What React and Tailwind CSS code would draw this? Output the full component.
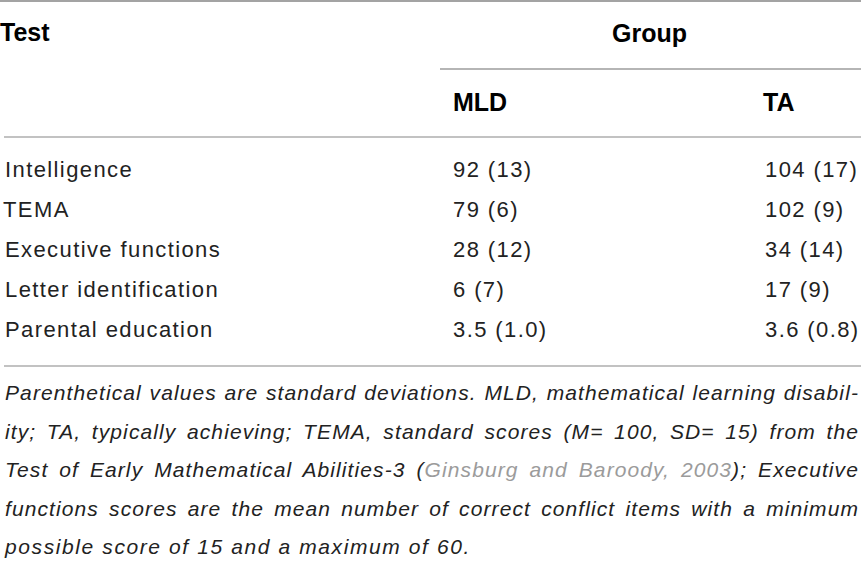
import React from "react";

const rows = [
  { test: "Intelligence", mld: "92 (13)", ta: "104 (17)" },
  { test: "TEMA", mld: "79 (6)", ta: "102 (9)", tight: true },
  { test: "Executive functions", mld: "28 (12)", ta: "34 (14)" },
  { test: "Letter identification", mld: "6 (7)", ta: "17 (9)" },
  { test: "Parental education", mld: "3.5 (1.0)", ta: "3.6 (0.8)" },
];

const App = () => {
  return (
    <div
      className="w-[861px] h-[565px] bg-white overflow-hidden text-[#222]"
      style={{ fontFamily: '"Liberation Sans", Arial, sans-serif' }}
    >
      {/* Top rule */}
      <div className="h-[2px] bg-[#a3a3a3]" />

      {/* Header */}
      <div className="grid grid-cols-[440px_323px_1fr] text-[25px] font-bold text-black leading-[30px]">
        <div className="row-span-3 pt-[15px]">Test</div>
        <div className="col-span-2 h-[66px] pt-[16px] text-center pr-[2px]">Group</div>
        <div className="col-span-2 h-[2px] bg-[#b5b5b5]" />
        <div className="h-[66px] pt-[17px] pl-[13px]">MLD</div>
        <div className="h-[66px] pt-[17px]">TA</div>
      </div>
      <div className="ml-[4px] h-[2px] bg-[#c2c2c2]" />

      {/* Body */}
      <div className="pt-[12px] pb-[15px] text-[22px] leading-[40px] tracking-[1.4px]">
        {rows.map((r) => (
          <div key={r.test} className="grid grid-cols-[440px_323px_1fr]">
            <div className={r.tight ? "pl-[3px]" : "pl-[5px]"}>{r.test}</div>
            <div className="pl-[13px]">{r.mld}</div>
            <div className="pl-[2px]">{r.ta}</div>
          </div>
        ))}
      </div>
      <div className="ml-[4px] h-[2px] bg-[#c2c2c2]" />

      {/* Footnote */}
      <div className="pt-[7px] pl-[5px] pr-[2px] text-[21px] leading-[38.5px] italic tracking-[1.1px] text-[#222]">
        <div className="text-justify [text-align-last:justify]">
          Parenthetical values are standard deviations. MLD, mathematical learning disabil-
        </div>
        <div className="text-justify [text-align-last:justify]">
          ity; TA, typically achieving; TEMA, standard scores (M= 100, SD= 15) from the
        </div>
        <div className="text-justify [text-align-last:justify]">
          Test of Early Mathematical Abilities-3 (
          <span className="text-[#9b9b9b]">Ginsburg and Baroody, 2003</span>); Executive
        </div>
        <div className="text-justify [text-align-last:justify]">
          functions scores are the mean number of correct conflict items with a minimum
        </div>
        <div className="tracking-[1.6px]">possible score of 15 and a maximum of 60.</div>
      </div>
    </div>
  );
};

export default App;
